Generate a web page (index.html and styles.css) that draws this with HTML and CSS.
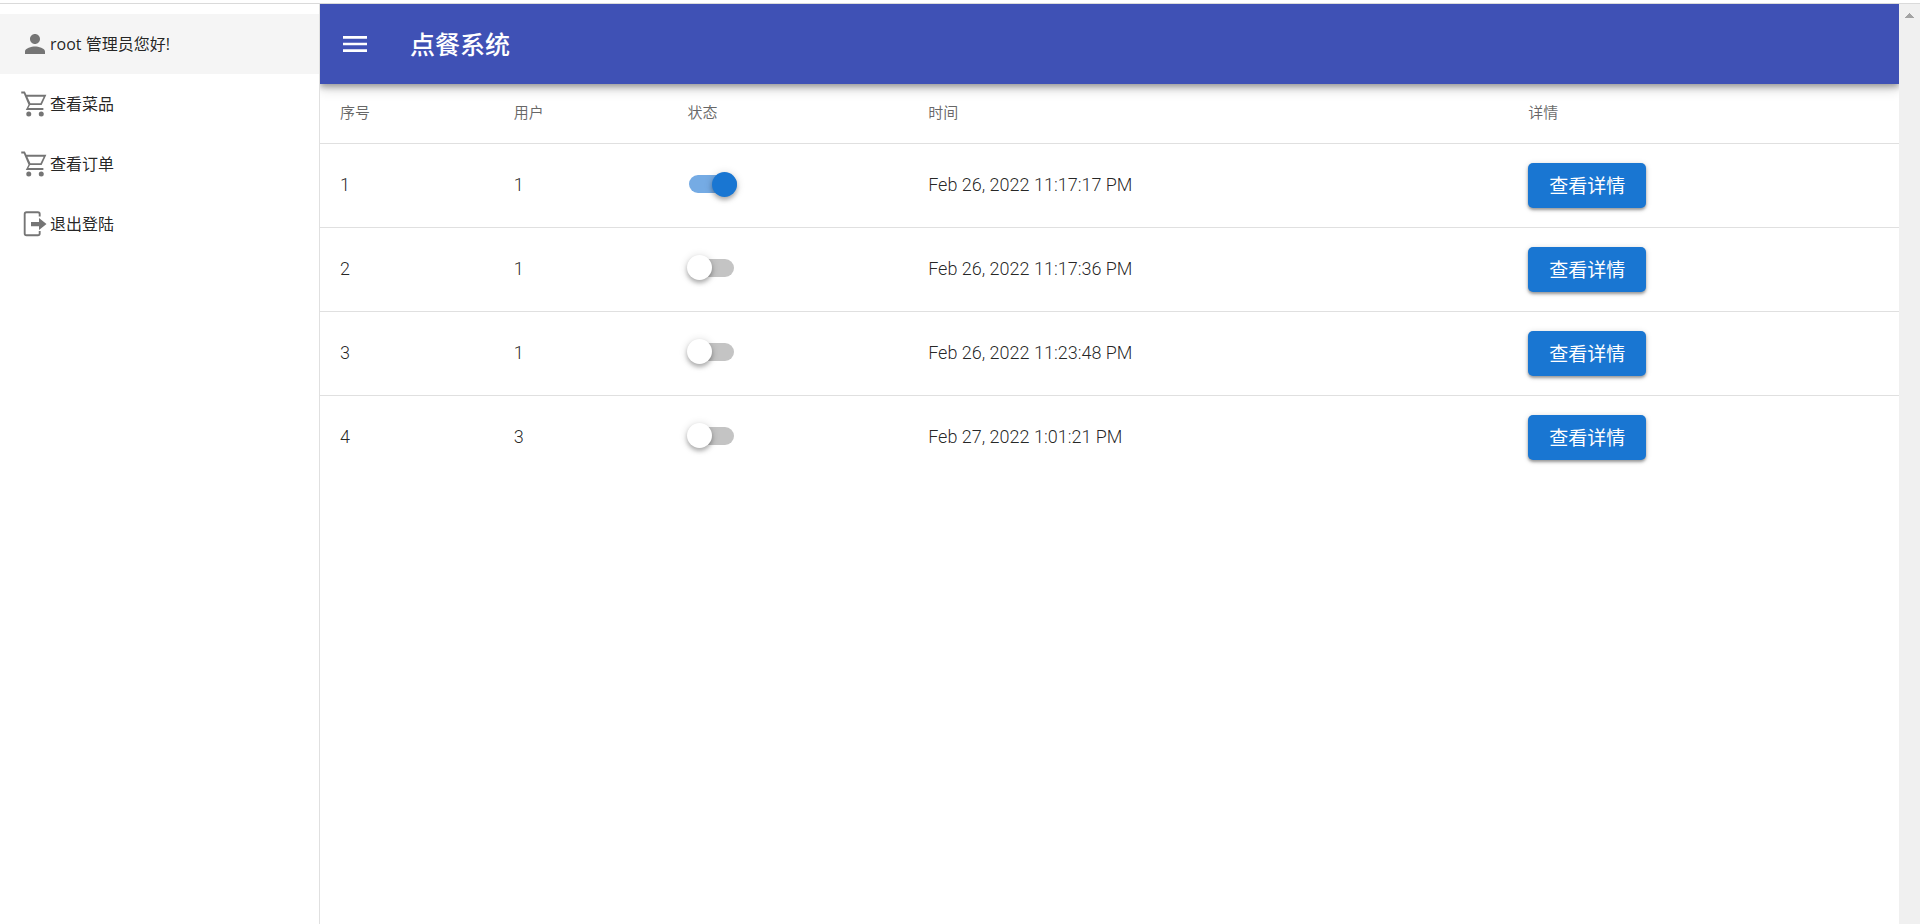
FILE: index.html
```html
<!DOCTYPE html>
<html lang="zh-CN">
<head>
<meta charset="utf-8">
<title>点餐系统</title>
<link rel="stylesheet" href="styles.css">
</head>
<body>
<svg class="sprite" aria-hidden="true">
  <symbol id="person" viewBox="0 0 24 24"><path d="M12 12c2.210 0 4-1.790 4-4s-1.790-4-4-4-4 1.790-4 4 1.790 4 4 4zm0 2c-2.670 0-8 1.340-8 4v2h16v-2c0-2.660-5.330-4-8-4z"/></symbol>
  <symbol id="cart" viewBox="0 0 24 24"><path d="M1 2h2.900l1.200 2.600H21.100l-3.800 8.200H8l-1.300 2.400H18.700v1.500H4.600l2.200-4.100L3 3.500H1zM5.900 6.100l2.400 5.200h8.100l2.500-5.200z"/><circle cx="7" cy="20" r="2"/><circle cx="17" cy="20" r="2"/></symbol>
  <symbol id="exit" viewBox="0 0 24 24"><path d="M16.500 6V4a2.200 2.200 0 0 0-2.200-2.200H5.200A2.200 2.200 0 0 0 3 4v15.500a2.200 2.200 0 0 0 2.200 2.200h9.100a2.200 2.200 0 0 0 2.200-2.200V17.500H15v2a.7.7 0 0 1-.7.7H5.200a.7.7 0 0 1-.7-.7V4a.7.7 0 0 1 .7-.7h9.100a.7.7 0 0 1 .7.7v2z"/><path d="M8.800 10.300h6.400V7.200l6 4.800-6 4.800v-3.100H8.800z"/></symbol>
</svg>
<div class="frame">
  <nav class="sidebar">
    <a class="nav-item active" href="#"><svg class="icon"><use href="#person"/></svg><span class="label">root 管理员您好!</span></a>
    <a class="nav-item" href="#"><svg class="icon"><use href="#cart"/></svg><span class="label">查看菜品</span></a>
    <a class="nav-item" href="#"><svg class="icon"><use href="#cart"/></svg><span class="label">查看订单</span></a>
    <a class="nav-item" href="#"><svg class="icon"><use href="#exit"/></svg><span class="label">退出登陆</span></a>
  </nav>
  <main class="content">
    <header class="toolbar">
      <button class="menu" type="button" aria-label="菜单"><svg viewBox="0 0 24 24"><path d="M3 18h18v-2H3v2zm0-5h18v-2H3v2zm0-7v2h18V6H3z"/></svg></button>
      <h1 class="title">点餐系统</h1>
    </header>
    <table class="orders">
      <colgroup><col class="c-no"><col class="c-user"><col class="c-state"><col class="c-time"><col></colgroup>
      <thead><tr><th>序号</th><th>用户</th><th>状态</th><th>时间</th><th>详情</th></tr></thead>
      <tbody>
        <tr><td>1</td><td>1</td><td><input class="switch" type="checkbox" aria-label="状态 1" checked></td><td>Feb 26, 2022 11:17:17 PM</td><td><button class="detail" type="button">查看详情</button></td></tr>
        <tr><td>2</td><td>1</td><td><input class="switch" type="checkbox" aria-label="状态 2"></td><td>Feb 26, 2022 11:17:36 PM</td><td><button class="detail" type="button">查看详情</button></td></tr>
        <tr><td>3</td><td>1</td><td><input class="switch" type="checkbox" aria-label="状态 3"></td><td>Feb 26, 2022 11:23:48 PM</td><td><button class="detail" type="button">查看详情</button></td></tr>
        <tr><td>4</td><td>3</td><td><input class="switch" type="checkbox" aria-label="状态 4"></td><td>Feb 27, 2022 1:01:21 PM</td><td><button class="detail" type="button">查看详情</button></td></tr>
      </tbody>
    </table>
  </main>
  <div class="scrollbar" aria-hidden="true"><svg viewBox="0 0 9 5"><path d="M4 0h1v1h1v1h1v1h1v1h1v1H0V4h1V3h1V2h1V1h1z"/></svg></div>
</div>
</body>
</html>
```

FILE: styles.css
```css
* { box-sizing: border-box; }
body {
  margin: 0;
  padding-top: 3px;
  background: #fff;
  color: rgba(0, 0, 0, 0.87);
  font-family: Roboto, "Noto Sans CJK SC", sans-serif;
}
.sprite { position: absolute; width: 0; height: 0; }
.frame {
  display: flex;
  min-height: calc(100vh - 3px);
  border-top: 1px solid #dadada;
}
.sidebar {
  flex: none;
  width: 320px;
  padding-top: 10px;
  border-right: 1px solid #e0e0e0;
}
.nav-item {
  display: flex;
  align-items: center;
  height: 60px;
  padding: 0 20px;
  color: rgba(0, 0, 0, 0.87);
  font-family: "Open Sans", "Noto Sans CJK SC", sans-serif;
  font-size: 16px;
  text-decoration: none;
}
.active { background: #f5f5f5; }
.icon { width: 30px; height: 30px; fill: #757575; }
.label { padding-bottom: 2px; }
.content { flex: 1; min-width: 0; }
.toolbar {
  position: relative;
  display: flex;
  align-items: center;
  gap: 34px;
  height: 80px;
  padding: 0 14px;
  background: #3f51b5;
  color: #fff;
  box-shadow: 0 3px 6px rgba(0, 0, 0, 0.3), 0 5px 12px rgba(0, 0, 0, 0.16);
  clip-path: inset(0 0 -20px 0);
}
.menu {
  display: flex;
  padding: 5px;
  border: 0;
  background: none;
}
.menu svg { width: 32px; height: 32px; fill: #fff; }
.title { margin: 0; padding-bottom: 3px; font-size: 25px; font-weight: 500; }
.orders {
  width: 100%;
  table-layout: fixed;
  border-collapse: separate;
  border-spacing: 0;
}
.c-no, .c-user { width: 11%; }
.c-state { width: 15.25%; }
.c-time { width: 38%; }
th, td { padding: 0 20px; text-align: left; }
th {
  height: 60px;
  padding-bottom: 4px;
  border-bottom: 1px solid #e0e0e0;
  color: rgba(0, 0, 0, 0.6);
  font-size: 15px;
  font-weight: 400;
}
td { height: 84px; font-size: 18px; font-weight: 300; border-bottom: 1px solid #e0e0e0; }
td:not(:last-child) { padding-bottom: 3px; }
tbody tr:last-child td { height: 83px; border-bottom: 0; }
.switch {
  display: block;
  appearance: none;
  position: relative;
  width: 45px;
  height: 18px;
  margin: 0 0 0 2px;
  border-radius: 9px;
  background: #c4c4c4;
}
.switch::before {
  content: "";
  position: absolute;
  top: -4px;
  left: -2px;
  width: 25px;
  height: 25px;
  border-radius: 50%;
  background: #fff;
  box-shadow: 0 3px 4px rgba(0, 0, 0, 0.25), 0 1px 8px rgba(0, 0, 0, 0.16);
}
.switch:checked { width: 48px; background: #75abe4; }
.switch:checked::before { top: -3px; left: 23px; background: #1976d2; }
.detail {
  display: block;
  height: 45px;
  padding: 0 21px 2px;
  border: 0;
  border-radius: 5px;
  background: #1976d2;
  color: #fff;
  font: 400 19px Roboto, "Noto Sans CJK SC", sans-serif;
  box-shadow: 0 2px 3px rgba(0, 0, 0, 0.35), 0 1px 6px rgba(0, 0, 0, 0.14);
}
.scrollbar { flex: none; width: 21px; padding: 9px 6px; background: #f0f0f0; }
.scrollbar svg { display: block; width: 9px; height: 5px; fill: #a3a3a3; }
```
